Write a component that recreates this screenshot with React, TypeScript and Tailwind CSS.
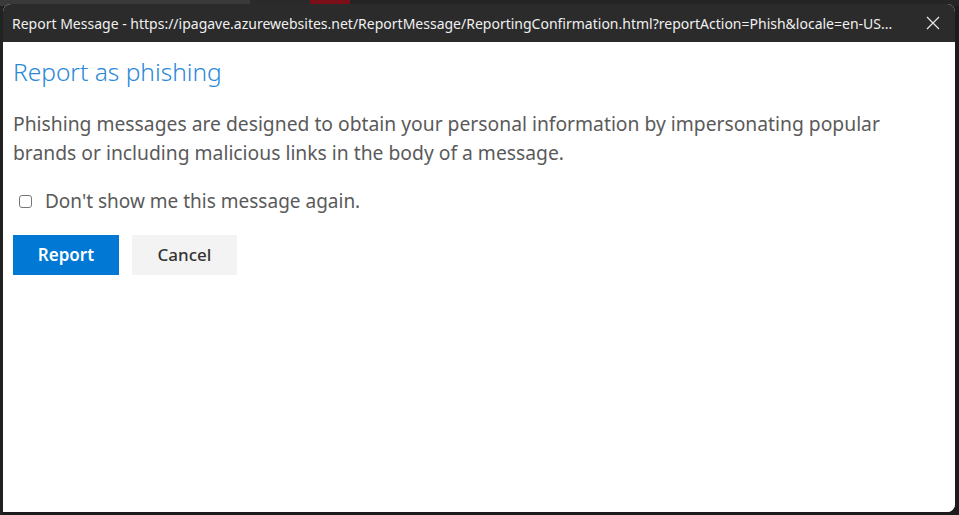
import React from "react";

export default function App() {
  const font = { fontFamily: '"Noto Sans", "Open Sans", Arial, sans-serif' };
  return (
    <div className="w-[959px] h-[515px] bg-[#1c1c1c] overflow-hidden relative" style={font}>
      {/* background app peeking */}
      <div className="absolute left-0 top-0 w-[959px] h-[6px] flex">
        <div className="w-[250px] h-full bg-[#3a3a3a]" />
        <div className="w-[60px] h-full bg-[#2a2a2a]" />
        <div className="w-[40px] h-full bg-[#7a0f1a]" />
        <div className="flex-1 h-full bg-[#252525]" />
      </div>
      <div className="absolute left-0 top-[6px] w-[3px] h-[509px] bg-[#222]" />
      <div className="pl-[3px] pt-[4px] relative">
        <div className="w-[952px] h-[508px] rounded-t-[8px] rounded-br-[8px] overflow-hidden flex flex-col bg-white">
          <div className="h-[38px] bg-[#2b2b2b] flex items-center pl-[9px] pr-[14px] shrink-0">
            <div className="flex-1 min-w-0 whitespace-nowrap text-[14px] text-[#f0f0f0]" style={{ fontFamily: '"Noto Sans", Arial, sans-serif' }}>
              Report Message - https://ipagave.azurewebsites.net/ReportMessage/ReportingConfirmation.html?reportAction=Phish&amp;locale=en-US...
            </div>
            <svg width="14" height="14" viewBox="0 0 14 14" className="shrink-0 mr-[1px]">
              <path d="M1 1 L13 13 M13 1 L1 13" stroke="#e8e8e8" strokeWidth="1.2" />
            </svg>
          </div>
          <div className="flex-1 bg-white pl-[10px] pt-[14px]">
            <h1 className="text-[24.5px] leading-[32px] text-[#2b88d8] font-light">Report as phishing</h1>
            <p className="mt-[21px] text-[19.3px] leading-[29px] text-[#5a5a5a] w-[920px]">
              Phishing messages are designed to obtain your personal information by impersonating popular<br />brands or including malicious links in the body of a message.
            </p>
            <label className="flex items-center mt-[22px] h-[24px]">
              <span className="ml-[6px] w-[13px] h-[13px] border border-[#767676] rounded-[3px] bg-white" />
              <span className="ml-[13px] text-[19px] text-[#5a5a5a]">Don't show me this message again.</span>
            </label>
            <div className="flex mt-[22px] gap-[13px]">
              <button className="w-[106px] h-[40px] bg-[#0078d4] text-white text-[17px] font-semibold">Report</button>
              <button className="w-[105px] h-[40px] bg-[#f3f3f3] text-[#333] text-[17px] font-medium">Cancel</button>
            </div>
          </div>
        </div>
      </div>
    </div>
  );
}
